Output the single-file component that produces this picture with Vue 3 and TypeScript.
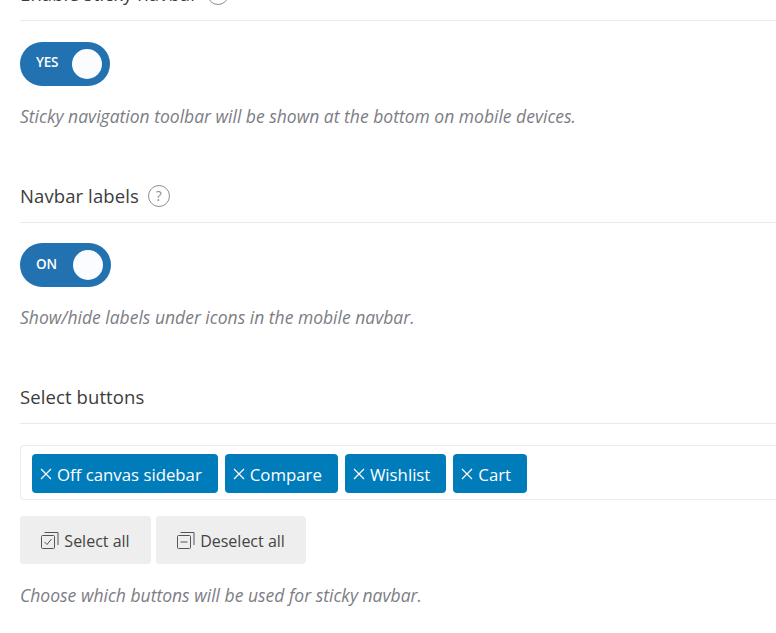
<script setup lang="ts">
const sections = [
  { title: 'Enable sticky navbar', on: 'YES', desc: 'Sticky navigation toolbar will be shown at the bottom on mobile devices.' },
  { title: 'Navbar labels', on: 'ON', desc: 'Show/hide labels under icons in the mobile navbar.' },
]
const chips = ['Off canvas sidebar', 'Compare', 'Wishlist', 'Cart']
</script>

<template>
  <div class="page">
    <section v-for="(s, i) in sections" :key="s.title" class="section" :class="{ first: i === 0 }">
      <div class="head">
        <h3>{{ s.title }}</h3>
        <span class="help">?</span>
      </div>
      <div class="toggle" :class="{ wide: s.on === 'ON' }">
        <span class="label">{{ s.on }}</span>
        <span class="knob"></span>
      </div>
      <p class="desc">{{ s.desc }}</p>
    </section>

    <section class="section last">
      <div class="head"><h3>Select buttons</h3></div>
      <div class="box">
        <span v-for="c in chips" :key="c" class="chip">
          <svg class="x" viewBox="0 0 12 12" width="12" height="12"><path d="M1 1l10 10M11 1l-10 10" /></svg>
          {{ c }}
        </span>
      </div>
      <div class="actions">
        <button class="btn select">
          <svg class="ico" viewBox="0 0 18 18" width="18" height="18" fill="none" stroke="#555" stroke-width="1">
            <path d="M3.500 1.500h13.500v12.500" />
            <rect x="0.500" y="4.500" width="13" height="13" rx="1" />
            <path d="M3.500 11l2.500 2.500 4.500-5.500" />
          </svg>
          Select all
        </button>
        <button class="btn deselect">
          <svg class="ico" viewBox="0 0 18 18" width="18" height="18" fill="none" stroke="#555" stroke-width="1">
            <path d="M3.500 1.500h13.500v12.500" />
            <rect x="0.500" y="4.500" width="13" height="13" rx="1" />
            <path d="M3.500 11h7" />
          </svg>
          Deselect all
        </button>
      </div>
      <p class="desc">Choose which buttons will be used for sticky navbar.</p>
    </section>
  </div>
</template>

<style>
html, body { margin: 0; background: #fff; overflow: hidden; }
</style>

<style scoped>
.page {
  width: 776px;
  height: 633px;
  overflow: hidden;
  box-sizing: border-box;
  padding-left: 20px;
  font-family: "Open Sans", "Noto Sans", sans-serif;
  color: #3c3c3c;
}
.section { width: 800px; margin-bottom: 55.9px; }
.section.first { margin-top: -17.8px; }
.head {
  box-sizing: border-box;
  display: flex;
  align-items: flex-end;
  gap: 9px;
  height: 39px;
  padding-bottom: 14px;
  border-bottom: 1px solid #e9e9e9;
}
h3 {
  margin: 0;
  font-size: 18.5px;
  line-height: 24px;
  font-weight: 500;
  letter-spacing: 0.1px;
}
.help {
  box-sizing: border-box;
  width: 22px;
  height: 22px;
  margin-bottom: 1px;
  border: 1px solid #8f8f8f;
  border-radius: 50%;
  color: #8f8f8f;
  font-size: 14px;
  line-height: 20px;
  text-align: center;
}
.toggle {
  box-sizing: border-box;
  display: flex;
  align-items: center;
  justify-content: space-between;
  width: 90px;
  height: 44px;
  margin-top: 20.6px;
  padding: 0 8px 0 16px;
  border-radius: 22px;
  background: #2271b1;
}
.toggle.wide { width: 91px; }
.label {
  padding-bottom: 3px;
  color: #fff;
  font-size: 13.5px;
  font-weight: 600;
  letter-spacing: -0.2px;
}
.toggle.wide .label { padding-bottom: 2px; }
.knob {
  width: 30px;
  height: 30px;
  border-radius: 50%;
  background: #fbfcff;
}
.desc {
  margin: 18px 0 0;
  font-size: 17.5px;
  line-height: 24px;
  font-style: italic;
  color: #7d7d85;
}
.last .desc { margin-top: 19px; }
.box {
  box-sizing: border-box;
  display: flex;
  gap: 7px;
  height: 55px;
  margin-top: 21px;
  padding: 8px 11px;
  border: 1px solid #ebebeb;
  border-radius: 4px;
}
.chip {
  box-sizing: border-box;
  display: flex;
  align-items: center;
  gap: 5px;
  height: 39px;
  padding: 2px 16px 0 8px;
  border-radius: 4px;
  background: #007cba;
  color: #fff;
  font-size: 16.8px;
}
.x { margin-top: -2px; fill: none; stroke: #fff; stroke-width: 1.2; }
.actions { display: flex; gap: 5px; margin-top: 16px; }
.btn {
  box-sizing: border-box;
  display: flex;
  align-items: center;
  justify-content: center;
  gap: 5px;
  height: 48px;
  padding: 2px 0 0;
  border: 0;
  border-radius: 4px;
  background: #eeeeee;
  color: #444;
  font-family: inherit;
  font-size: 16px;
  font-weight: 500;
}
.ico { margin-top: -2px; }
.select { width: 131px; }
.deselect { width: 150px; }
</style>
